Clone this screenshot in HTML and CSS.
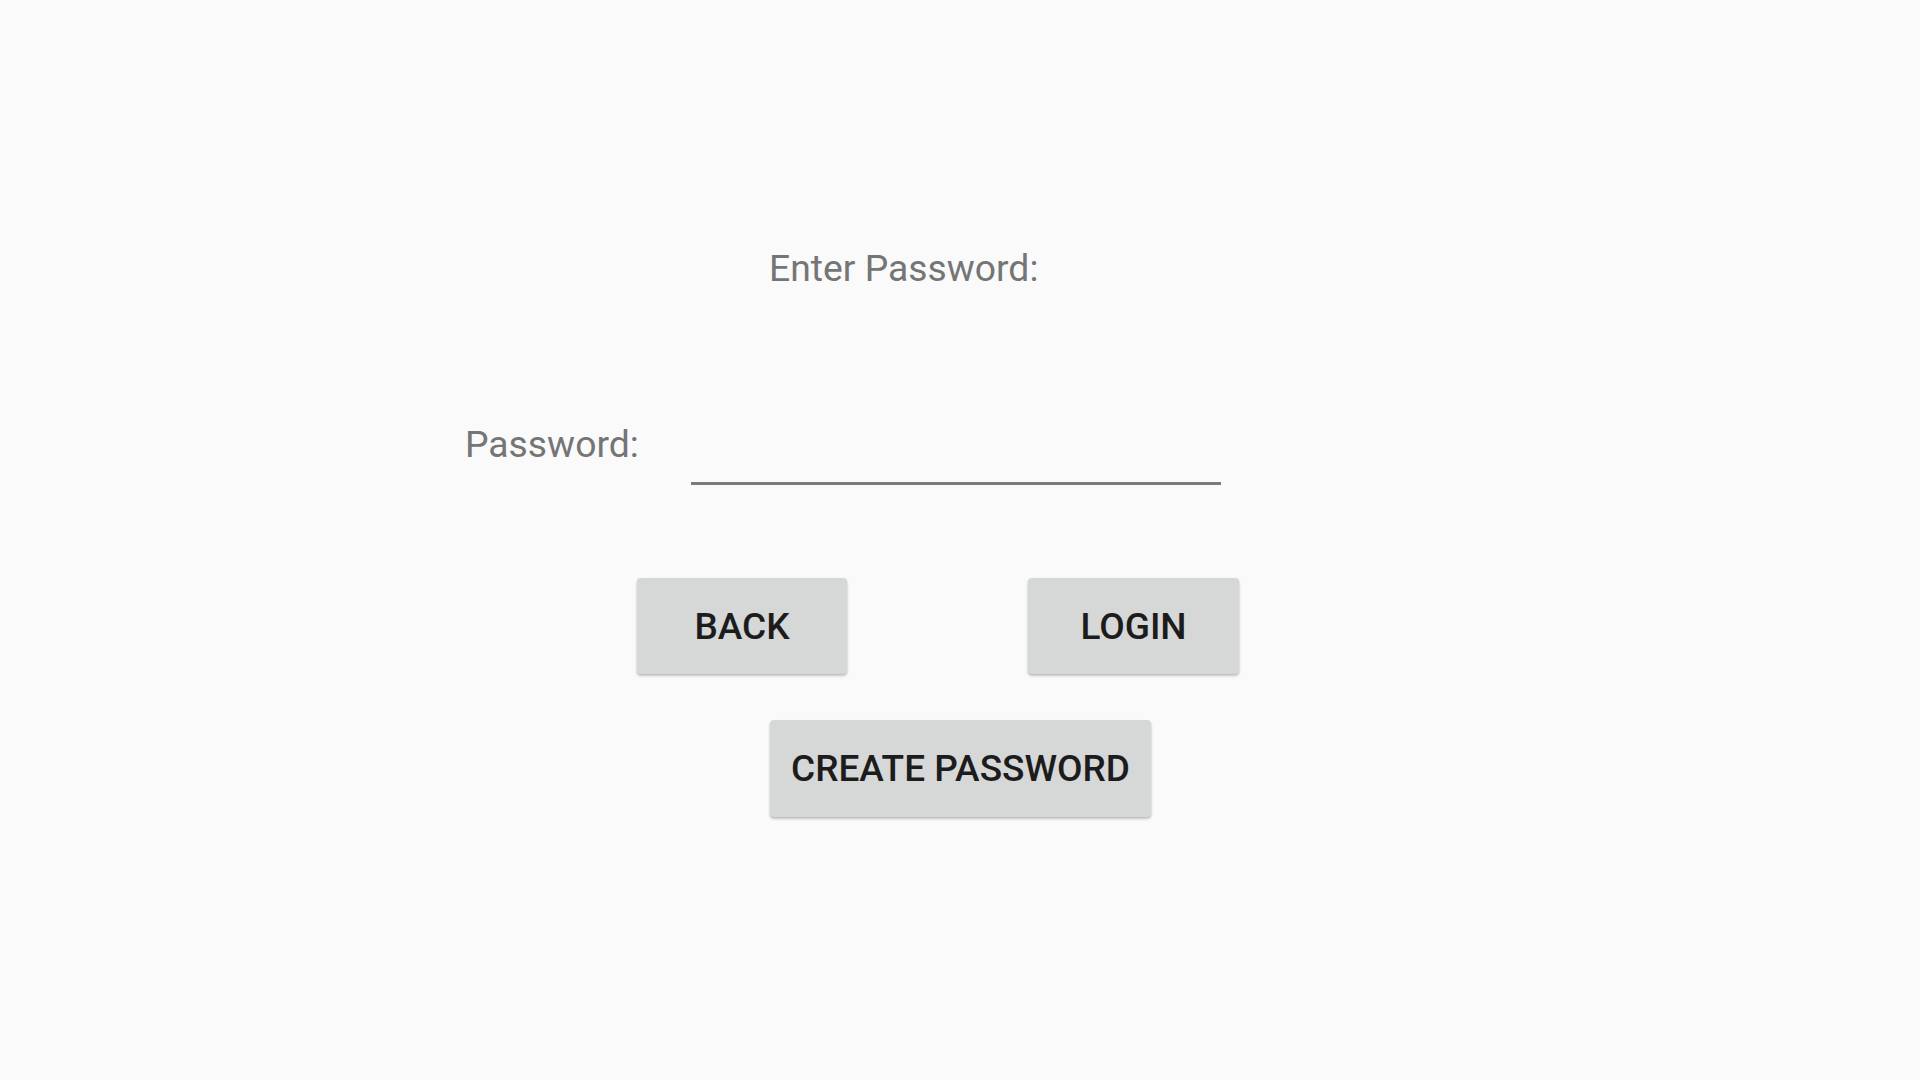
FILE: index.html
```html
<!DOCTYPE html>
<html lang="en">
<head>
<meta charset="utf-8">
<title>Enter Password</title>
<link rel="stylesheet" href="styles.css">
</head>
<body>
<main class="screen">
  <div class="title">Enter Password:</div>
  <div class="password-row">
    <label class="field-label" for="pw">Password:</label>
    <div class="field"><input id="pw" class="field-input" type="password"></div>
  </div>
  <div class="button-row">
    <button class="btn btn-back">BACK</button>
    <button class="btn btn-login">LOGIN</button>
  </div>
  <div class="create-row">
    <button class="btn btn-create">CREATE PASSWORD</button>
  </div>
</main>
</body>
</html>
```

FILE: styles.css
```css
html, body {
  margin: 0;
  padding: 0;
  background: #fafafa;
}

body {
  width: 1920px;
  height: 1080px;
  overflow: hidden;
  font-family: Roboto, "Liberation Sans", sans-serif;
}

.screen {
  display: flex;
  flex-direction: column;
  padding-top: 249px;
}

.title {
  margin-left: 769px;
  font-size: 37.3px;
  line-height: 38px;
  color: #757575;
}

.password-row {
  display: flex;
  align-items: flex-start;
  margin-top: 138px;
}

.field-label {
  margin-left: 465px;
  width: 226px;
  font-size: 37.3px;
  line-height: 38px;
  color: #757575;
}

.field {
  width: 530px;
  height: 57px;
  border-bottom: 3px solid #7a7a7a;
}

.field-input {
  width: 100%;
  height: 100%;
  border: 0;
  padding: 0;
  background: transparent;
  outline: none;
  font-size: 37px;
}

.button-row {
  display: flex;
  margin-top: 93px;
  margin-left: 637px;
  gap: 181px;
}

.create-row {
  display: flex;
  margin-top: 46px;
  margin-left: 770px;
}

.btn {
  height: 96px;
  border: 0;
  border-radius: 4px;
  background: #d6d7d7;
  color: #1c1c1c;
  font-family: Roboto, "Liberation Sans", sans-serif;
  font-weight: 500;
  font-size: 37px;
  line-height: 37px;
  padding: 0;
  box-shadow: 0 2px 3px rgba(0, 0, 0, 0.18), 0 1px 2px rgba(0, 0, 0, 0.12);
  display: flex;
  align-items: center;
  justify-content: center;
}

.btn-back {
  width: 210px;
}

.btn-login {
  width: 211px;
}

.btn-create {
  width: 381px;
  height: 97px;
}
```
